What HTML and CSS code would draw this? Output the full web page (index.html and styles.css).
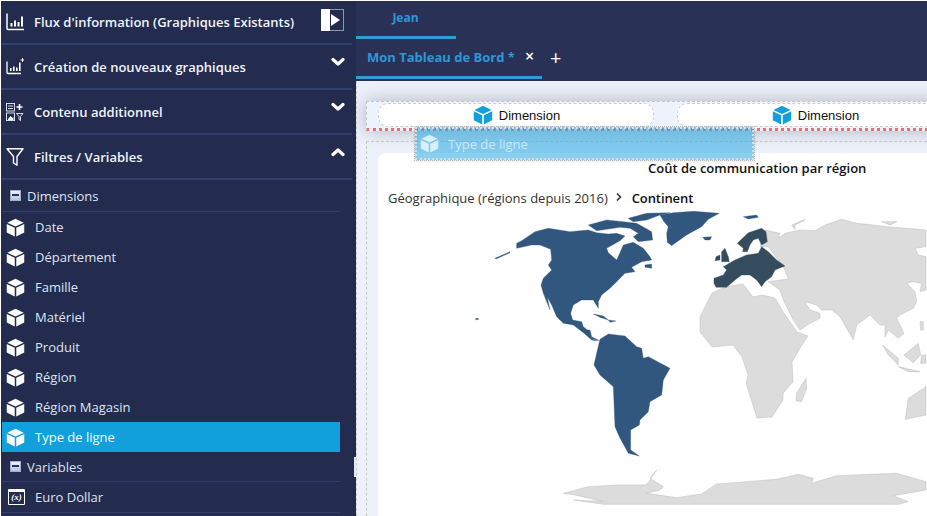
FILE: index.html
```html
<!DOCTYPE html>
<html lang="fr">
<head>
<meta charset="utf-8">
<title>Mon Tableau de Bord</title>
<link rel="stylesheet" href="styles.css">
</head>
<body>
<svg class="defs" width="0" height="0">
  <symbol id="cube" viewBox="0 0 20 20">
    <path d="M10 .8 18.600 4.900 10 9 1.400 4.900Z"/>
    <path d="M.8 6.200 9.200 10.200V19.500L.8 15.300Z"/>
    <path d="M19.200 6.200 10.800 10.200V19.500L19.200 15.300Z"/>
  </symbol>
  <symbol id="chev" viewBox="0 0 14 10">
    <path d="M2 2.500 7 7 12 2.500" fill="none" stroke="currentColor" stroke-width="3.200" stroke-linecap="round" stroke-linejoin="round"/>
  </symbol>
</svg>
<div class="app">
  <aside class="sidebar">
    <div class="section section-first">
      <svg class="sec-icon" viewBox="0 0 18 18"><path d="M1 1V15.500Q1 16.500 2 16.500H18" fill="none" stroke="#fff" stroke-width="1.500" stroke-linecap="round"/><path d="M4.500 10h2v3.500h-2zM8 7.500h2v6H8zM11.500 9h2v4.500h-2zM15 3.500h2v10h-2z" fill="#fff"/></svg>
      <span class="sec-label">Flux d'information (Graphiques Existants)</span>
      <div class="toggle"><span class="toggle-white"></span><span class="toggle-arrow"></span></div>
    </div>
    <div class="section">
      <svg class="sec-icon" viewBox="0 0 18 18"><path d="M1 4V14.500Q1 15.500 2 15.500H14.500" fill="none" stroke="#fff" stroke-width="1.300" stroke-linecap="round"/><path d="M4 10h1.600v3H4zM7 8.500h1.600v4.500H7zM10 9.500h1.600v3.500H10zM13 4.500h1.600v8.500H13z" fill="#fff"/><path d="M16.500 0v4M14.500 2h4" stroke="#fff" stroke-width="1"/></svg>
      <span class="sec-label">Création de nouveaux graphiques</span>
      <svg class="chev"><use href="#chev"/></svg>
    </div>
    <div class="section">
      <svg class="sec-icon" viewBox="0 0 18 18"><g fill="none" stroke="#d8dce8" stroke-width="1"><rect x=".5" y=".5" width="8" height="7.500"/><rect x=".5" y="10" width="8" height="7.500"/></g><path d="M2 3h5M2 5.500h5" stroke="#d8dce8"/><path d="M2 16l2.500-3 2 2 1-1v3H2z" fill="#fff"/><path d="M13.500 1v6M10.500 4h6" stroke="#fff" stroke-width="1.600"/><path d="M10.500 10.500h6.500l-2.500 3v4l-1.500-1v-3z" fill="none" stroke="#d8dce8"/></svg>
      <span class="sec-label">Contenu additionnel</span>
      <svg class="chev"><use href="#chev"/></svg>
    </div>
    <div class="section">
      <svg class="sec-icon" viewBox="0 0 18 18"><path d="M1 .8H17L11 8.500V17.200L7.500 15V8.500Z" fill="none" stroke="#fff" stroke-width="1.400" stroke-linejoin="round"/></svg>
      <span class="sec-label">Filtres / Variables</span>
      <svg class="chev chev-up"><use href="#chev"/></svg>
    </div>
    <div class="tree-head tree-head-dim"><span class="minus"></span>Dimensions</div>
    <div class="item"><svg class="cube"><use href="#cube"/></svg><span>Date</span></div>
    <div class="item"><svg class="cube"><use href="#cube"/></svg><span>Département</span></div>
    <div class="item"><svg class="cube"><use href="#cube"/></svg><span>Famille</span></div>
    <div class="item"><svg class="cube"><use href="#cube"/></svg><span>Matériel</span></div>
    <div class="item"><svg class="cube"><use href="#cube"/></svg><span>Produit</span></div>
    <div class="item"><svg class="cube"><use href="#cube"/></svg><span>Région</span></div>
    <div class="item"><svg class="cube"><use href="#cube"/></svg><span>Région Magasin</span></div>
    <div class="item item-active"><svg class="cube"><use href="#cube"/></svg><span>Type de ligne</span></div>
    <div class="tree-head tree-head-var"><span class="minus"></span>Variables</div>
    <div class="item item-var"><span class="var-icon">(x)</span><span>Euro Dollar</span></div>
    <span class="resize-handle"></span>
  </aside>

  <main class="main">
    <div class="tabs tabs-top"><div class="tab tab-jean">Jean</div></div>
    <div class="tabs tabs-second">
      <div class="tab tab-board">Mon Tableau de Bord *<span class="tab-close">×</span></div>
      <span class="tab-add">+</span>
    </div>
    <div class="canvas">
      <div class="dropzone">
        <div class="pill"><svg class="cube cube-blue"><use href="#cube"/></svg>Dimension</div>
        <div class="pill"><svg class="cube cube-blue"><use href="#cube"/></svg>Dimension</div>
      </div>
      <div class="panel">
        <div class="card">
          <div class="card-title">Coût de communication par région</div>
          <div class="crumbs"><span>Géographique (régions depuis 2016)</span><svg class="crumb-sep" viewBox="0 0 8 10"><path d="M2 1.500 5.500 5 2 8.500" fill="none" stroke="#333" stroke-width="1.600"/></svg><b>Continent</b></div>
          <svg class="map" viewBox="378 210 549 306" width="549" height="306">
            <g class="land">
              <g transform="translate(700 210) scale(.3333)">
                <path d="M195 60 240 70 235 85 255 70 300 60 345 62 375 45 425 28 470 40 520 45 560 50 620 55 678 60V110L645 115 655 135 678 140V240L660 245 665 220 640 215 620 220 645 245 650 275 640 295 600 315 590 325 612 370 595 385 565 360 555 380 555 345 540 345 510 315 470 345 460 390 420 320 395 300 365 300 350 285 315 275 330 300 360 310 360 325 330 340 300 360 280 330 250 270 240 240 205 215 265 207 250 170 205 110 180 110Z"/>
                <path d="M275 45 315 28 312 32 285 45 285 58Z"/>
                <path d="M545 35 590 35 570 45Z"/>
                <path d="M660 335 670 335 670 360 662 360Z"/>
              </g>
              <path d="M700 317 712 293 725 287 743 284 753 297 762 295 775 298 782 310 797 332 808 336 800 348 792 362 793 382 783 393 783 400 772 417 757 418 746 383 748 375 742 357 733 345 712 347 700 332Z"/>
              <g transform="translate(500 330) scale(.3333)">
                <path d="M918 145 920 175 905 215 888 212 890 190Z"/>
                <path d="M1278 170 1225 205 1216 268 1278 255Z"/>
                <path d="M1148 45 1195 85 1195 105 1165 75Z"/>
                <path d="M1212 75 1255 40 1262 75 1240 98Z"/>
                <path d="M1195 110 1230 118 1260 125 1225 125Z"/>
                <path d="M1265 75 1278 75 1278 100 1262 100Z"/>
                <path d="M190 490 220 482 265 470 350 465 435 465 445 458 470 420 450 445 490 470 480 480 440 490 530 503 605 492 650 462 830 448 895 433 940 445 935 460 1010 437 1190 430 1278 455V480L1180 497 1225 515 1195 523H310L220 510 310 515 225 495Z"/>
              </g>
            </g>
            <g class="america">
              <g transform="translate(460 210) scale(.3333)">
                <path d="M170 100 185 92 225 65 265 55 330 65 385 60 410 68 445 72 470 70 495 78 480 92 440 115 445 128 470 150 480 128 490 105 520 97 550 115 570 140 575 150 545 155 515 172 525 185 495 190 470 215 450 235 425 255 415 275 415 295 400 270 365 270 340 285 332 310 338 330 365 335 370 350 385 362 390 385 412 392 395 390 375 372 340 345 310 340 290 320 275 285 262 262 270 300 250 250 243 225 250 205 275 180 265 165 275 150 272 118 240 105 215 105 170 115Z"/>
                <path d="M385 45 440 30 490 35 530 40 575 65 578 90 535 95 520 80 535 70 510 55 480 52 440 58 410 62Z"/>
                <path d="M505 25 560 10 630 8 600 15 560 30 520 35Z"/>
                <path d="M600 15 640 8 700 4 778 10 745 28 725 50 680 75 645 100 635 107 622 97 620 70 625 50 612 35Z"/>
                <path d="M728 82 755 80 750 90 735 90Z"/>
                <path d="M850 20 890 15 895 22 865 27Z"/>
                <path d="M400 312 430 318 445 330 420 322Z"/>
                <path d="M445 330 468 333 450 337Z"/>
                <path d="M555 165 575 162 575 175 555 172Z"/>
                <path d="M105 145 150 125 150 128 108 147Z"/>
                <path d="M47 325h8v4h-8z"/>
              </g>
              <g transform="translate(500 330) scale(.3333)">
                <path d="M300 28 325 12 375 18 410 50 425 55 430 85 445 80 510 115 490 150 485 195 450 215 445 245 420 270 418 285 392 300 392 360 418 378 385 370 358 320 345 290 340 170 300 135 282 105 290 70Z"/>
                <path d="M245 0H270L275 20 298 32 270 25Z"/>
              </g>
            </g>
            <g class="europe" transform="translate(460 210) scale(.3333)">
              <path d="M762 205 790 195 800 180 790 170 825 150 860 135 895 130 905 110 925 125 950 150 975 168 945 180 935 200 915 215 905 230 890 210 870 195 845 195 825 210 800 232 768 232 762 220Z"/>
              <path d="M832 100 865 68 905 55 918 65 922 95 905 105 895 85 880 90 870 105 862 125 848 125 850 115Z"/>
              <path d="M785 125 795 115 805 140 808 155 785 155Z"/>
              <path d="M768 140 780 135 780 150 765 152Z"/>
            </g>
          </svg>
        </div>
      </div>
      <div class="ghost"><svg class="cube"><use href="#cube"/></svg><span>Type de ligne</span></div>
    </div>
  </main>
</div>
</body>
</html>
```

FILE: styles.css
```css
* { box-sizing: border-box; }
html, body { margin: 0; height: 100%; }
body {
  background: #fff;
  padding: 1px 0 0 1px;
  overflow: hidden;
  font-family: "Open Sans", sans-serif;
  font-size: 13px;
  color: #fff;
}
.defs { position: absolute; }
.app { display: flex; height: 515px; width: 926px; }

.sidebar {
  position: relative;
  flex: 0 0 355px;
  background: #232b4e;
}
.section {
  display: flex;
  align-items: center;
  height: 45px;
  margin-right: 4px;
  padding: 0 0 0 5px;
  border-bottom: 2px solid #323e6e;
  position: relative;
}
.section-first { height: 44px; padding-bottom: 1px; }
.sec-icon { flex: 0 0 18px; width: 18px; height: 18px; margin-right: 10px; }
.sec-label { font-weight: 600; font-size: 13px; white-space: nowrap; color: #f0f3fa; }
.toggle {
  position: absolute;
  left: 320px;
  top: 8px;
  width: 23px;
  height: 22px;
  border: 1px solid #8f96ad;
  display: flex;
  align-items: center;
}
.toggle-white { width: 9px; height: 22px; background: #fff; margin-left: -1px; }
.toggle-arrow {
  margin-left: 1px;
  border-left: 9px solid #fff;
  border-top: 6px solid transparent;
  border-bottom: 6px solid transparent;
}
.chev {
  position: absolute;
  left: 330px;
  top: 12px;
  width: 14px;
  height: 10px;
  color: #fff;
}
.chev-up { transform: rotate(180deg); }

.tree-head {
  display: flex;
  align-items: center;
  margin: 0 16px 0 1px;
  border-bottom: 1px solid #323e6e;
  font-size: 13px;
  color: #dfe4f0;
  padding-left: 8px;
}
.tree-head-dim { height: 32px; }
.tree-head-var { height: 30px; }
.minus {
  position: relative;
  flex: 0 0 11px;
  height: 11px;
  margin-right: 6px;
  background: linear-gradient(#eef2fa, #b6c4de);
  border: 1px solid #9fb0cf;
}
.minus::after {
  content: "";
  position: absolute;
  left: 1px;
  top: 3px;
  width: 7px;
  height: 2px;
  background: #2b3356;
}
.item {
  display: flex;
  align-items: center;
  height: 30px;
  margin: 0 16px 0 1px;
  padding-left: 4px;
  color: #dfe4f0;
  font-size: 13px;
}
.item > span:last-child { margin-left: 10px; }
.item-active { background: #12a0dc; color: #f4fbff; }
.item-var { border-bottom: 1px solid #323e6e; padding-left: 6px; height: 31px; }
.cube { width: 19px; height: 19px; fill: #fff; flex: 0 0 19px; }
.var-icon {
  flex: 0 0 17px;
  width: 17px;
  height: 16px;
  border: 1.500px solid #fff;
  border-top-width: 3px;
  border-radius: 1px;
  font: italic bold 9px/11px "Liberation Serif", serif;
  text-align: center;
  color: #fff;
}
.item-var > span:last-child { margin-left: 10px; }
.resize-handle {
  position: absolute;
  left: 353px;
  top: 456px;
  width: 2px;
  height: 20px;
  background: #e8e8ee;
}

.main {
  flex: 1;
  display: flex;
  flex-direction: column;
  min-width: 0;
  background: #2a3157;
}
.tabs { display: flex; align-items: flex-start; flex: 0 0 auto; }
.tabs-top { height: 38px; }
.tabs-second { height: 42px; }
.tab { font-weight: 700; color: #2f97d4; white-space: nowrap; }
.tab-jean {
  width: 100px;
  height: 38px;
  border-bottom: 3px solid #2f9cd8;
  font-size: 12px;
  line-height: 34px;
  text-align: center;
  padding-right: 1px;
}
.tab-board {
  width: 186px;
  height: 40px;
  border-bottom: 3px solid #2f9cd8;
  padding: 0 0 0 11px;
  font-size: 13px;
  line-height: 35px;
}
.tab-close { color: #fff; font-size: 16px; font-weight: 600; margin-left: 10px; }
.tab-add { color: #fff; font-size: 20px; line-height: 37px; margin-left: 8px; }

.canvas {
  position: relative;
  flex: 1;
  overflow: hidden;
  background: #edf1f9;
  border-left: 1px dashed #ccc;
  padding: 20px 0 0 9px;
  min-height: 0;
}
.dropzone {
  display: flex;
  gap: 23px;
  width: 700px;
  height: 30px;
  padding: 1px 0 0 11px;
  border-top: 1px dashed #c4c4c4;
  border-left: 1px dashed #c4c4c4;
  border-bottom: 3px dotted #f46a6a;
  background: #edf3fc;
  box-shadow: 0 0 18px rgba(50, 55, 80, .32);
  overflow: hidden;
}
.pill {
  display: flex;
  align-items: center;
  justify-content: center;
  flex: 0 0 276px;
  height: 24px;
  background: #fff;
  border: 1px dashed #ccc;
  border-radius: 10px;
  font: 13px "Liberation Sans", sans-serif;
  color: #111;
  padding-left: 1px;
}
.cube-blue { fill: #12a0dc; width: 20px; height: 20px; flex-basis: 20px; margin-right: 6px; }
.panel {
  margin-top: 10px;
  padding: 11px 0 0 11px;
  border-top: 1px dashed #c8c8c8;
  border-left: 1px dashed #c8c8c8;
  height: 400px;
}
.card {
  width: 560px;
  height: 400px;
  background: #fff;
  border-radius: 8px 0 0 0;
  color: #222;
}
.card-title {
  padding: 6px 0 0 270px;
  font-weight: 600;
  font-size: 13px;
  line-height: 18px;
  color: #111;
  white-space: nowrap;
}
.crumbs {
  display: flex;
  align-items: center;
  margin-top: 12px;
  padding-left: 10px;
  font-size: 13px;
  line-height: 18px;
  color: #333;
  white-space: nowrap;
}
.crumbs b { font-weight: 600; color: #111; letter-spacing: -.1px; }
.crumb-sep { width: 8px; height: 10px; margin: 0 9px 2px 7px; }
.map { display: block; margin-top: 3px; filter: blur(.35px); }
.land path { fill: #dcdcdc; stroke: #bdbdbd; stroke-width: .5; }
.land g path { stroke-width: 1.500; }
.america path { fill: #31577f; stroke: #31577f; stroke-width: 1; }
.europe path { fill: #344c5d; stroke: #344c5d; stroke-width: 1; }

.ghost {
  position: absolute;
  left: 58px;
  top: 46px;
  width: 339px;
  height: 33px;
  display: flex;
  align-items: center;
  padding-left: 1px;
  background: rgba(40, 170, 225, .55);
  border: 2px dotted #ddd;
  outline: 1px dotted #bbb;
  color: rgba(255, 255, 255, .6);
  box-shadow: 0 1px 3px rgba(0, 0, 0, .15);
}
.ghost .cube { fill: rgba(255, 255, 255, .7); margin: 0 9px 0 2px; }
```
